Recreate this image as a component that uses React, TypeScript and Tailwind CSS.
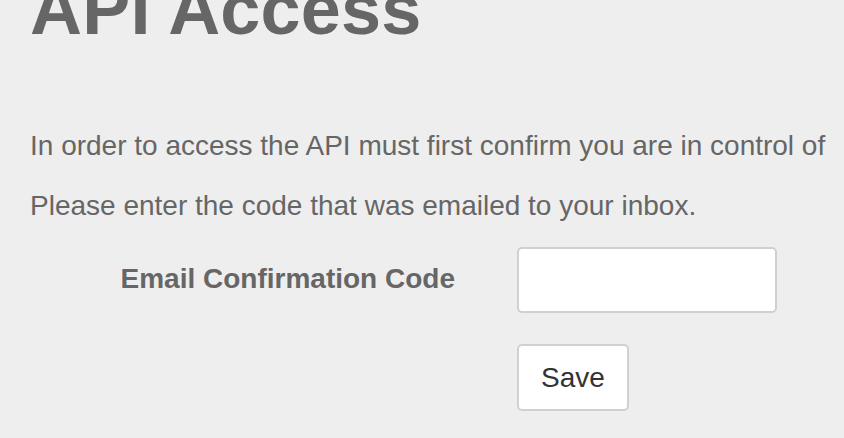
import React from 'react';

const App: React.FC = () => {
  return (
    <div className="w-[844px] h-[438px] overflow-hidden bg-[#eeeeee] pl-[30px] font-['Liberation_Sans',Arial,sans-serif] text-[#666666]">
      {/* heading sits partly above the viewport, as in the scrolled page */}
      <h1 className="-mt-[27px] text-[72px] leading-[72px] font-bold whitespace-nowrap tracking-[0.2px]">API Access</h1>

      <div className="mt-[81px] space-y-[20px] text-[28px] leading-[40px] whitespace-nowrap">
        <p>In order to access the API must first confirm you are in control of</p>
        <p>Please enter the code that was emailed to your inbox.</p>
      </div>

      <form className="mt-[21px] grid grid-cols-[425px_260px] gap-x-[62px] gap-y-[31px]">
        <label htmlFor="code" className="self-center text-right text-[28px] leading-[40px] font-bold -mt-[2px]">
          Email Confirmation Code
        </label>
        <input
          id="code"
          type="text"
          className="h-[66px] w-[260px] rounded-[5px] border-2 border-[#d0d0d0] bg-white px-3 text-[28px] outline-none"
        />
        <div />
        <div>
          <button
            type="button"
            className="h-[67px] w-[112px] rounded-[5px] border-2 border-[#d0d0d0] bg-white text-[28px] text-[#333333]"
          >
            Save
          </button>
        </div>
      </form>
    </div>
  );
};

export default App;
